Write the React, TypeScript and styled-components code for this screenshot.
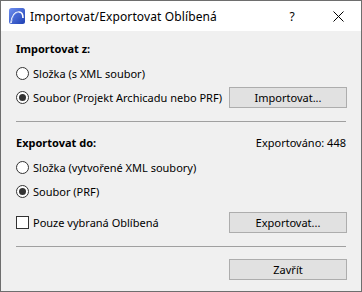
import * as React from 'react'
import styled, { createGlobalStyle } from 'styled-components'

const GlobalStyle = createGlobalStyle`
  html, body {
    margin: 0;
    padding: 0;
    background: #ffffff;
  }
  * {
    box-sizing: border-box;
  }
`

const Window = styled.div`
  width: 362px;
  height: 292px;
  border: 1px solid #6e6e6e;
  background: #f0f0f0;
  display: flex;
  flex-direction: column;
  font-family: 'Noto Sans', 'Open Sans', sans-serif;
  font-size: 11px;
  color: #000;
  overflow: hidden;
  white-space: nowrap;
`

const TitleBar = styled.div`
  height: 30px;
  background: #ffffff;
  display: flex;
  align-items: center;
  padding-left: 8px;
  font-size: 12px;
`

const TitleText = styled.span`
  margin-left: 5px;
  flex: 1;
  letter-spacing: 0.12px;
`

const TitleButton = styled.div`
  width: 46px;
  height: 30px;
  display: flex;
  align-items: center;
  justify-content: center;
`

const Body = styled.div`
  flex: 1;
  display: flex;
  flex-direction: column;
  padding: 10px 15px 0 15px;
`

const Heading = styled.div<{ $top?: number }>`
  height: 16px;
  line-height: 16px;
  margin-top: ${({ $top }) => $top ?? 0}px;
  display: flex;
  justify-content: space-between;
`

const Bold = styled.span`
  font-weight: 700;
`

const Row = styled.div<{ $top?: number; $height?: number }>`
  height: ${({ $height }) => $height ?? 24}px;
  margin-top: ${({ $top }) => $top ?? 0}px;
  display: flex;
  align-items: center;
  justify-content: space-between;
`

const Option = styled.label`
  display: flex;
  align-items: center;
  gap: 4px;
  flex-shrink: 0;
`

const RadioCircle = styled.span<{ $checked?: boolean }>`
  width: 13px;
  height: 13px;
  border-radius: 50%;
  border: 1px solid #333333;
  background: #ffffff;
  display: flex;
  align-items: center;
  justify-content: center;
  flex-shrink: 0;

  &::after {
    content: '';
    width: 7px;
    height: 7px;
    border-radius: 50%;
    background: ${({ $checked }) => ($checked ? '#333333' : 'transparent')};
  }
`

const CheckBox = styled.span`
  width: 13px;
  height: 13px;
  border: 1px solid #333333;
  background: #ffffff;
  flex-shrink: 0;
`

const Button = styled.button`
  width: 118px;
  height: 21px;
  flex-shrink: 0;
  background: #e1e1e1;
  border: 1px solid #adadad;
  font-family: inherit;
  font-size: 11px;
  color: #000;
  padding: 0;
  margin-right: -1px;
`

const Separator = styled.div<{ $top: number }>`
  height: 1px;
  background: #a0a0a0;
  margin-top: ${({ $top }) => $top}px;
`

const Footer = styled.div`
  display: flex;
  justify-content: flex-end;
  margin-top: 12px;
`

function AppIcon() {
  return (
    <svg width="16" height="16" viewBox="0 0 16 16">
      <defs>
        <linearGradient id="ac" x1="0" y1="0" x2="1" y2="1">
          <stop offset="0" stopColor="#6f8ff0" />
          <stop offset="1" stopColor="#1d3fb3" />
        </linearGradient>
      </defs>
      <rect x="0" y="0" width="16" height="16" rx="2.5" fill="url(#ac)" />
      <path d="M2 15 C3 8 6 4 10 4 C13 4 14 7 14 10" stroke="#fff" strokeWidth="1.6" fill="none" />
      <path d="M2 15 C3 8 6 4 10 4 L9 7 C6 7 4 10 2 15 Z" fill="#3b5fd6" opacity="0.6" />
    </svg>
  )
}

function CloseIcon() {
  return (
    <svg width="11" height="11" viewBox="0 0 11 11">
      <path d="M0.5 0.5 L10.5 10.5 M10.5 0.5 L0.5 10.5" stroke="#000" strokeWidth="1" />
    </svg>
  )
}

export default function App() {
  return (
    <>
      <GlobalStyle />
      <Window>
        <TitleBar>
          <AppIcon />
          <TitleText>Importovat/Exportovat Oblíbená</TitleText>
          <TitleButton>?</TitleButton>
          <TitleButton>
            <CloseIcon />
          </TitleButton>
        </TitleBar>
        <Body>
          <Heading>
            <Bold>Importovat z:</Bold>
          </Heading>
          <Row $top={4}>
            <Option>
              <RadioCircle />
              Složka (s XML soubor)
            </Option>
          </Row>
          <Row>
            <Option>
              <RadioCircle $checked />
              Soubor (Projekt Archicadu nebo PRF)
            </Option>
            <Button>Importovat...</Button>
          </Row>
          <Separator $top={12} />
          <Heading $top={13}>
            <Bold>Exportovat do:</Bold>
            <span>Exportováno: 448</span>
          </Heading>
          <Row $top={4}>
            <Option>
              <RadioCircle />
              Složka (vytvořené XML soubory)
            </Option>
          </Row>
          <Row>
            <Option>
              <RadioCircle $checked />
              Soubor (PRF)
            </Option>
          </Row>
          <Row $top={8} $height={23}>
            <Option>
              <CheckBox />
              Pouze vybraná Oblíbená
            </Option>
            <Button>Exportovat...</Button>
          </Row>
          <Separator $top={12} />
          <Footer>
            <Button>Zavřít</Button>
          </Footer>
        </Body>
      </Window>
    </>
  )
}
